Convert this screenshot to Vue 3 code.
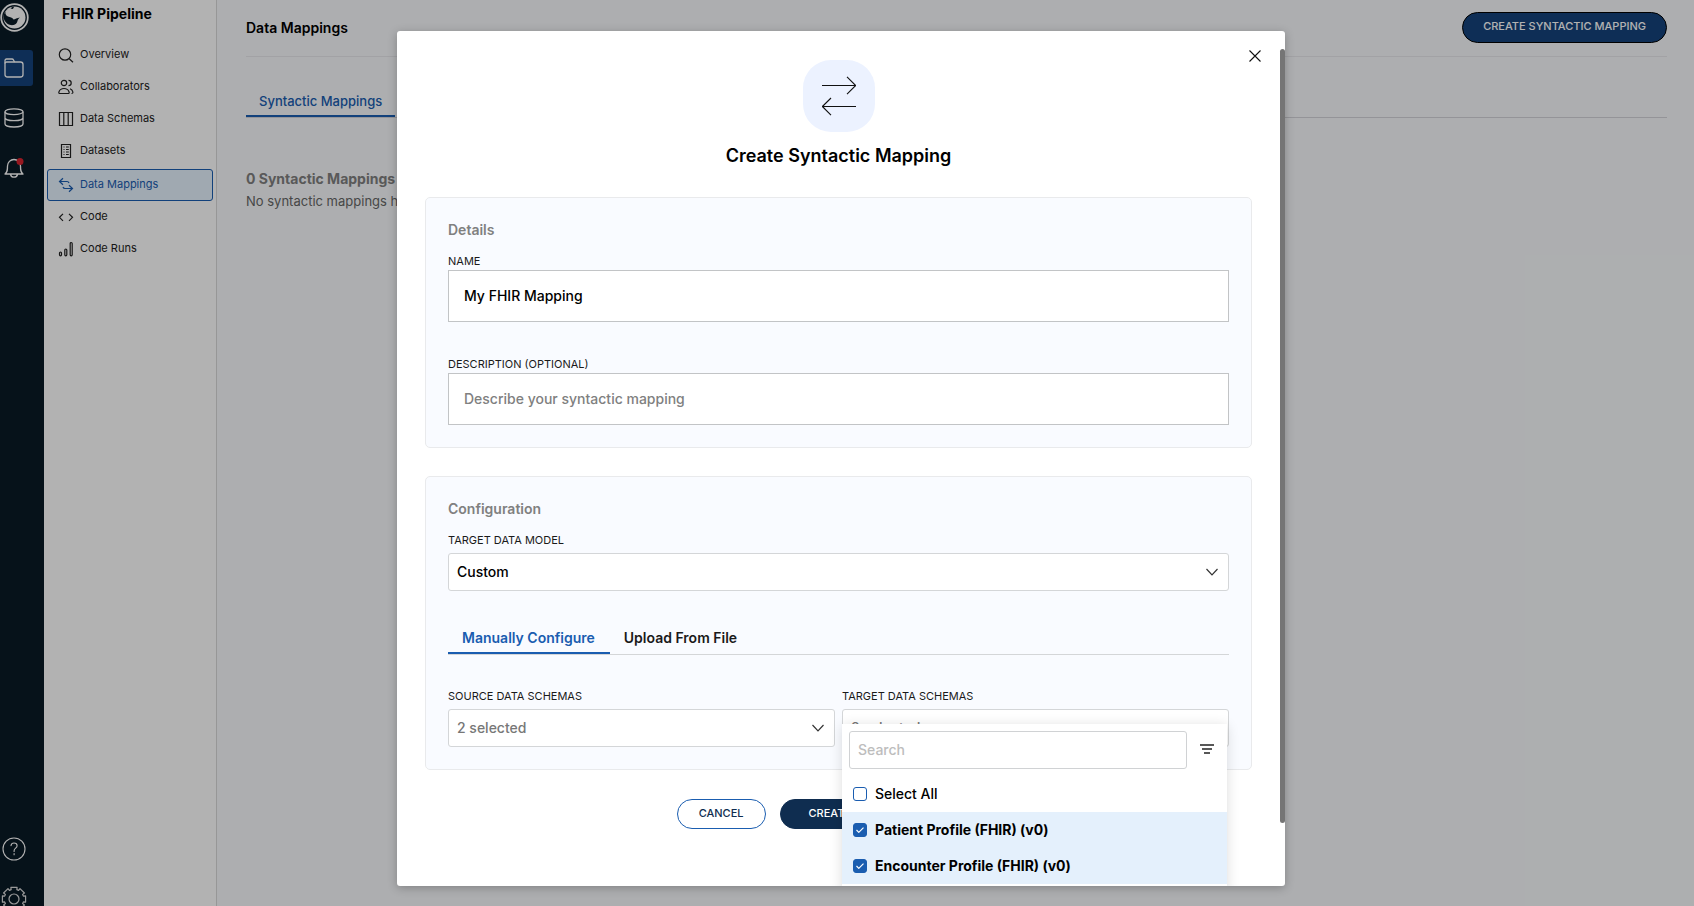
<script setup>
import { ref, computed } from 'vue'

const navItems = [
  { id: 'overview', label: 'Overview' },
  { id: 'collaborators', label: 'Collaborators' },
  { id: 'schemas', label: 'Data Schemas' },
  { id: 'datasets', label: 'Datasets' },
  { id: 'mappings', label: 'Data Mappings' },
  { id: 'code', label: 'Code' },
  { id: 'runs', label: 'Code Runs' },
]
const activeNav = 'mappings'

const name = ref('My FHIR Mapping')
const description = ref('')
const model = ref('Custom')
const configTab = ref('manual')
const search = ref('')
const schemas = ref([
  { id: 'patient', label: 'Patient Profile (FHIR) (v0)', checked: true },
  { id: 'encounter', label: 'Encounter Profile (FHIR) (v0)', checked: true },
])
const selectedLabel = computed(() => `${schemas.value.filter((s) => s.checked).length} selected`)

// Outline of a cog with eight teeth around the origin
const cogPath = (() => {
  const points = []
  for (let i = 0; i < 8; i++) {
    for (const [offset, radius] of [[-17, 9.8], [-15, 12], [15, 12], [17, 9.8]]) {
      const a = ((i * 45 + offset - 90) * Math.PI) / 180
      points.push(`${(radius * Math.cos(a)).toFixed(2)} ${(radius * Math.sin(a)).toFixed(2)}`)
    }
  }
  return `M${points.join('L')}Z`
})()
</script>

<template>
  <div class="app">
    <nav class="rail" aria-label="Main">
      <a href="#" class="logo" aria-label="Home">
        <svg width="29" height="29" viewBox="0 0 29 29">
          <circle cx="14.5" cy="14.5" r="13.300" fill="none" stroke="#fff" stroke-width="1.800" />
          <circle cx="14.5" cy="14.5" r="11" fill="#fff" />
          <path d="M5.500 8.500C5 11 6 12.500 8 13.500c2 1 4.500.8 5.500 3 1.500-.2 3.500-1.500 6.500-2-1.500 1.200-2.200 2-2.500 3.500-.5 2.500-2 3.500-4 4-2 .5-4.500-.2-6.500-1.500C3 17 2.500 12 5.500 8.500z" fill="#0a1a26" />
          <path d="M10.500 5.500c1-1.200 2.500-1.800 4-2-.8.700-1.300 1.500-1.500 2.500z" fill="#0a1a26" />
        </svg>
      </a>
      <a href="#" class="rail-item active" aria-label="Projects">
        <svg width="20" height="20" viewBox="0 0 20 20" fill="none" stroke="#fff" stroke-width="1.300" stroke-linejoin="round">
          <path d="M1 16.500V2.500A1.500 1.500 0 0 1 2.500 1h5.500q1 0 1.500 1l1 2h6A2.500 2.500 0 0 1 19 6.500v10a2.500 2.500 0 0 1-2.500 2.500h-13A2.500 2.500 0 0 1 1 16.500z" />
          <path d="M1 5.500C1 4.500 1.700 4 2.500 4h8" />
        </svg>
      </a>
      <a href="#" class="rail-item" aria-label="Data">
        <svg width="20" height="20" viewBox="0 0 20 20" fill="none" stroke="#fff" stroke-width="1.300">
          <ellipse cx="10" cy="3.700" rx="9" ry="2.900" />
          <path d="M1 3.700v12.300c0 1.700 4 3 9 3s9-1.300 9-3V3.700M1 9.700c0 1.700 4 3 9 3s9-1.300 9-3" />
        </svg>
      </a>
      <a href="#" class="rail-item" aria-label="Notifications">
        <svg width="20" height="22" viewBox="0 0 20 22" fill="none" stroke="#fff" stroke-width="1.300" stroke-linejoin="round">
          <path d="M1 17c2.500-2 2.500-4 2.500-8a6.500 6.500 0 0 1 13 0c0 4 0 6 2.500 8zM6.500 17.500c.5 1.800 1.800 2.700 3.500 2.700s3-.9 3.500-2.700" />
          <circle cx="16" cy="4.500" r="3.500" fill="#d8232f" stroke="none" />
        </svg>
      </a>
      <div class="rail-bottom">
        <a href="#" class="rail-item" aria-label="Help">
          <svg width="24" height="24" viewBox="0 0 24 24" fill="none" stroke="#fff" stroke-width="1.100">
            <circle cx="12" cy="12" r="11" />
            <path d="M9 8.600C9.200 6.900 10.400 6 12 6s3.100 1 3.100 2.700c0 2.400-3 2.500-3 5v.8M12.100 16.500v1.300" stroke-linecap="round" />
          </svg>
        </a>
        <a href="#" class="rail-item" aria-label="Settings">
          <svg width="26" height="26" viewBox="-13 -13 26 26" fill="none" stroke="#ddd" stroke-width="1.200" stroke-linejoin="round">
            <path :d="cogPath" />
            <circle r="5" />
          </svg>
        </a>
      </div>
    </nav>

    <aside class="sidebar">
      <h2 class="sidebar-title">FHIR Pipeline</h2>
      <a
        v-for="item in navItems"
        :key="item.id"
        href="#"
        class="nav-item"
        :class="{ active: item.id === activeNav }"
      >
        <svg class="nav-icon" width="16" height="16" viewBox="0 0 16 16">
          <template v-if="item.id === 'overview'">
            <circle cx="7" cy="7.500" r="5.700" />
            <path d="M11.200 11.700L15 15.200" />
          </template>
          <template v-else-if="item.id === 'collaborators'">
            <circle cx="6" cy="4" r="2.700" />
            <path d="M1.500 14.500c-.8 0-.8-1-.5-1.800C1.800 10.500 3.500 9.500 6 9.500s4.200 1 5 3.200c.3.800.3 1.800-.5 1.800z" />
            <path d="M10.500 1.300a2.700 2.700 0 0 1 0 5.400M12 9.700c1.500.5 2.400 1.500 2.800 3 .3 1-.1 1.800-1.300 1.800" />
          </template>
          <template v-else-if="item.id === 'schemas'">
            <path d="M1.500 1.500h13v13h-13zM5.800 1.500v13M10.200 1.500v13" />
          </template>
          <template v-else-if="item.id === 'datasets'">
            <path d="M3.500 1.500h9v13h-9z" />
            <path d="M5.500 4h1M8 4h2.800M5.500 6.500h1M8 6.500h2.800M5.500 9h1M8 9h2.800M5.500 11.500h1M8 11.500h2.800" />
          </template>
          <template v-else-if="item.id === 'mappings'">
            <path d="M5 1.200L1.500 4.500 5 7.800M1.500 4.500h7.500q1.500 0 2 1.500M11 8.200l3.500 3.300L11 14.800M14.500 11.500H7q-1.500 0-2-1.500" />
          </template>
          <template v-else-if="item.id === 'code'">
            <path d="M5 4.800L1.500 8.300 5 11.800M11 4.800l3.500 3.500L11 11.800" />
          </template>
          <template v-else>
            <rect x="1.500" y="11" width="2" height="3.800" rx="1" />
            <rect x="6.800" y="8" width="2" height="6.800" rx="1" />
            <rect x="12.200" y="1.500" width="2" height="13.300" rx="1" />
          </template>
        </svg>
        <span>{{ item.label }}</span>
      </a>
    </aside>

    <main class="main">
      <header class="main-header">
        <h1>Data Mappings</h1>
        <button type="button" class="btn btn-header">CREATE SYNTACTIC MAPPING</button>
      </header>
      <div class="page-tabs">
        <button type="button" class="page-tab">Syntactic Mappings</button>
      </div>
      <h2 class="empty-title">0 Syntactic Mappings</h2>
      <p class="empty-text">No syntactic mappings have been created</p>
    </main>

    <div class="overlay">
      <section class="modal" role="dialog" aria-modal="true" aria-labelledby="modal-title">
        <button type="button" class="close" aria-label="Close">
          <svg width="12" height="12" viewBox="0 0 12 12" fill="none" stroke="#111" stroke-width="1.100">
            <path d="M.5.5l11 11M11.500.5l-11 11" />
          </svg>
        </button>
        <div class="scroll-thumb"></div>

        <div class="badge">
          <svg width="34" height="40" viewBox="0 0 34 40" fill="none" stroke="#111" stroke-width="1.100">
            <path d="M0 9.500h33.500M25 .8l8.700 8.700-8.700 8.700M34 30.500H.5M9 22L.4 30.500 9 39.200" />
          </svg>
        </div>
        <h2 id="modal-title" class="modal-title">Create Syntactic Mapping</h2>

        <section class="card">
          <h3>Details</h3>
          <label for="name">NAME</label>
          <input id="name" v-model="name" type="text" class="text-input" />
          <label for="description" class="spaced">DESCRIPTION (OPTIONAL)</label>
          <input
            id="description"
            v-model="description"
            type="text"
            class="text-input"
            placeholder="Describe your syntactic mapping"
          />
        </section>

        <section class="card">
          <h3>Configuration</h3>
          <label for="model">TARGET DATA MODEL</label>
          <div class="select-box">
            <select id="model" v-model="model">
              <option>Custom</option>
            </select>
            <svg class="chevron" width="12" height="8" viewBox="0 0 12 8"><path d="M.5 1L6 6.800 11.500 1" /></svg>
          </div>

          <div class="config-tabs">
            <button type="button" :class="{ active: configTab === 'manual' }" @click="configTab = 'manual'">Manually Configure</button>
            <button type="button" :class="{ active: configTab === 'upload' }" @click="configTab = 'upload'">Upload From File</button>
          </div>

          <div class="columns">
            <div>
              <label for="source">SOURCE DATA SCHEMAS</label>
              <div class="select-box muted">
                <select id="source">
                  <option>2 selected</option>
                </select>
                <svg class="chevron" width="12" height="8" viewBox="0 0 12 8"><path d="M.5 1L6 6.800 11.500 1" /></svg>
              </div>
            </div>
            <div class="target">
              <label for="target">TARGET DATA SCHEMAS</label>
              <div class="select-box muted">
                <select id="target">
                  <option>{{ selectedLabel }}</option>
                </select>
              </div>
              <div class="menu">
                <div class="menu-search">
                  <input v-model="search" type="text" placeholder="Search" aria-label="Search" />
                  <button type="button" aria-label="Filter">
                    <svg width="14" height="10" viewBox="0 0 14 10" stroke="#222" stroke-width="1.600">
                      <path d="M0 1h14M2 5h10M4 9h6" />
                    </svg>
                  </button>
                </div>
                <label class="menu-row">
                  <input type="checkbox" />
                  <span class="box"></span>
                  Select All
                </label>
                <label v-for="s in schemas" :key="s.id" class="menu-row" :class="{ chosen: s.checked }">
                  <input v-model="s.checked" type="checkbox" />
                  <span class="box">
                    <svg v-if="s.checked" width="8" height="6" viewBox="0 0 8 6" fill="none" stroke="#fff" stroke-width="1.200">
                      <path d="M.5 3l2.300 2.300L7.500.6" />
                    </svg>
                  </span>
                  {{ s.label }}
                </label>
              </div>
            </div>
          </div>
        </section>

        <div class="actions">
          <button type="button" class="btn btn-cancel">CANCEL</button>
          <button type="button" class="btn btn-create">CREATE SYNTACTIC MAPPING</button>
        </div>
      </section>
    </div>
  </div>
</template>

<style>
body {
  margin: 0;
}
</style>

<style scoped>
.app {
  display: flex;
  height: 100vh;
  overflow: hidden;
  position: relative;
  font-family: Inter, "Liberation Sans", sans-serif;
  color: #000;
  background: #f8fafc;
}
.app * {
  box-sizing: border-box;
}
h1, h2, h3, p {
  margin: 0;
}
button, input, select {
  font: inherit;
  color: inherit;
}
button {
  cursor: pointer;
}
a {
  text-decoration: none;
}

/* Icon rail */
.rail {
  flex: none;
  display: flex;
  flex-direction: column;
  gap: 14px;
  width: 44px;
  padding-top: 3px;
  background: #0a1a26;
}
.logo {
  height: 33px;
}
.rail-item {
  display: flex;
  align-items: center;
  justify-content: center;
  width: 33px;
  height: 36px;
  padding-right: 5px;
  border-radius: 0 3px 3px 0;
}
.rail-item svg {
  flex: none;
}
.rail-item.active {
  background: #15437c;
}
.rail-bottom {
  display: flex;
  flex-direction: column;
  gap: 14px;
  margin-top: auto;
  margin-bottom: -11px;
}

/* Project sidebar */
.sidebar {
  flex: none;
  width: 173px;
  padding: 4px 3px;
  background: #fff;
  border-right: 1px solid #d8d8d8;
}
.sidebar-title {
  padding: 0 15px 15px;
  font-size: 14px;
  font-weight: 700;
  line-height: 20px;
}
.nav-item {
  display: flex;
  align-items: center;
  gap: 6px;
  height: 32px;
  padding: 0 11px;
  font-size: 11px;
  color: #222;
}
.nav-item span {
  padding-bottom: 2px;
}
.nav-item.active {
  margin-top: 2px;
  padding: 0 10px;
  color: #1a5db0;
  background: #e6f2fe;
  border: 1px solid #1a5db0;
  border-radius: 3px;
}
.nav-icon {
  flex: none;
  fill: none;
  stroke: currentColor;
  stroke-width: 1.2;
}

/* Page */
.main {
  flex: 1;
  min-width: 0;
  padding: 0 27px 0 29px;
}
.main-header {
  display: flex;
  align-items: center;
  justify-content: space-between;
  height: 57px;
  border-bottom: 1px solid #e8e8ec;
}
.main-header h1 {
  font-size: 14px;
  font-weight: 600;
  line-height: 24px;
}
.btn {
  height: 30px;
  padding: 0 21px 2px;
  border: 1px solid #1a5db0;
  border-radius: 16px;
  font-size: 11px;
  font-weight: 500;
}
.btn-header {
  height: 31px;
  margin-bottom: 1px;
  padding: 0 20px 3px;
  color: #fff;
  background: #15437c;
  border-color: #000;
}
.page-tabs {
  display: flex;
  margin-top: 34px;
  border-bottom: 1px solid #d4d5da;
}
.page-tab {
  padding: 0 13px 4px;
  border: 0;
  border-bottom: 2px solid #1a5db0;
  background: none;
  font-size: 13px;
  font-weight: 500;
  line-height: 20px;
  color: #1a5db0;
}
.empty-title {
  margin-top: 49px;
  font-size: 14px;
  font-weight: 700;
  line-height: 24px;
  color: #808080;
}
.empty-text {
  font-size: 13px;
  line-height: 20px;
  color: #666;
}

/* Modal */
.overlay {
  position: absolute;
  inset: 0;
  display: flex;
  justify-content: center;
  padding: 31px 12px 20px 0;
  background: rgba(0, 0, 0, 0.3);
}
.modal {
  position: relative;
  width: 888px;
  padding: 29px 33px 0 28px;
  overflow: hidden;
  background: #fff;
  border-radius: 3px;
  box-shadow: 0 2px 10px rgba(0, 0, 0, 0.25);
}
.close {
  position: absolute;
  top: 13px;
  right: 18px;
  display: flex;
  align-items: center;
  justify-content: center;
  width: 24px;
  height: 24px;
  padding: 0;
  border: 0;
  background: none;
}
.scroll-thumb {
  position: absolute;
  top: 18px;
  right: 0;
  bottom: 63px;
  width: 5px;
  border-radius: 3px;
  background: #757575;
}
.badge {
  display: flex;
  align-items: center;
  justify-content: center;
  width: 72px;
  height: 72px;
  margin: 0 auto;
  border-radius: 28px;
  background: #ecf2ff;
}
.modal-title {
  margin: 12px 0 29px;
  font-size: 18px;
  font-weight: 600;
  line-height: 24px;
  text-align: center;
}
.card {
  padding: 20px 22px 22px;
  border: 1px solid #e9eaec;
  border-radius: 5px;
  background: #f9fbff;
}
.card + .card {
  margin-top: 28px;
}
.card h3 {
  margin-bottom: 10px;
  font-size: 14px;
  font-weight: 600;
  line-height: 24px;
  color: #808080;
}
.card label {
  font-size: 11px;
  line-height: 18px;
}
.card > label,
.columns > div > label {
  display: block;
  color: #1a1a1a;
}
.card > label.spaced {
  margin-top: 33px;
}
.text-input {
  display: block;
  width: 100%;
  height: 52px;
  padding: 0 15px 2px;
  border: 1px solid #c2c4c6;
  border-radius: 0;
  background: #fff;
  font-size: 14px;
  font-weight: 500;
}
.text-input::placeholder {
  color: #808080;
  opacity: 1;
}
.select-box {
  position: relative;
  margin-top: 4px;
}
.select-box select {
  display: block;
  width: 100%;
  height: 38px;
  padding: 0 8px 2px;
  border: 1px solid #d4d6d8;
  border-radius: 3px;
  appearance: none;
  background: #fff;
  font-size: 14px;
  font-weight: 500;
}
.select-box.muted select {
  color: #777;
}
.chevron {
  position: absolute;
  top: 15px;
  right: 11px;
  fill: none;
  stroke: #333;
  stroke-width: 1.2;
  pointer-events: none;
}
.config-tabs {
  display: flex;
  margin-top: 35px;
  border-bottom: 1px solid #d4d6d8;
}
.config-tabs button {
  padding: 0 15px 2px 14px;
  border: 0;
  border-bottom: 2px solid transparent;
  background: none;
  font-size: 14px;
  font-weight: 600;
  line-height: 24px;
  color: #1a1a1a;
}
.config-tabs button.active {
  color: #1a5db0;
  border-color: #1a5db0;
}
.columns {
  display: grid;
  grid-template-columns: 1fr 1fr;
  gap: 7px;
  margin-top: 32px;
}
.target {
  position: relative;
}

/* Schema picker */
.menu {
  position: absolute;
  top: 37px;
  left: 0;
  right: 2px;
  z-index: 2;
  padding-bottom: 8px;
  background: #fff;
  box-shadow: 0 2px 12px rgba(0, 0, 0, 0.14);
}
.menu-search {
  display: flex;
  padding: 7px;
}
.menu-search input {
  flex: 1;
  min-width: 0;
  height: 38px;
  padding: 0 8px 2px;
  border: 1px solid #d0d2d4;
  border-radius: 3px;
  font-size: 14px;
  font-weight: 500;
}
.menu-search input::placeholder {
  color: #bdbdbd;
  opacity: 1;
}
.menu-search button {
  display: flex;
  align-items: center;
  justify-content: center;
  width: 33px;
  padding: 0 0 2px 7px;
  border: 0;
  background: none;
}
.card .menu-row {
  position: relative;
  display: flex;
  align-items: center;
  gap: 8px;
  height: 36px;
  padding: 0 11px;
  font-size: 14px;
  font-weight: 500;
}
.card .menu-row.chosen {
  font-weight: 700;
  background: #e4f0fc;
}
.menu-row input {
  position: absolute;
  width: 14px;
  height: 14px;
  margin: 0;
  opacity: 0;
}
.box {
  display: flex;
  align-items: center;
  justify-content: center;
  width: 14px;
  height: 14px;
  border: 1px solid #1a5db0;
  border-radius: 3px;
  background: #fff;
}
.chosen .box {
  background: #1a5db0;
}

.actions {
  display: flex;
  justify-content: center;
  gap: 14px;
  margin-top: 29px;
}
.btn-cancel {
  background: #fff;
  color: #0f2d50;
}
.btn-create {
  padding: 0 28px 2px;
  border-color: #0f2d50;
  background: #0f2d50;
  color: #fff;
}
</style>
